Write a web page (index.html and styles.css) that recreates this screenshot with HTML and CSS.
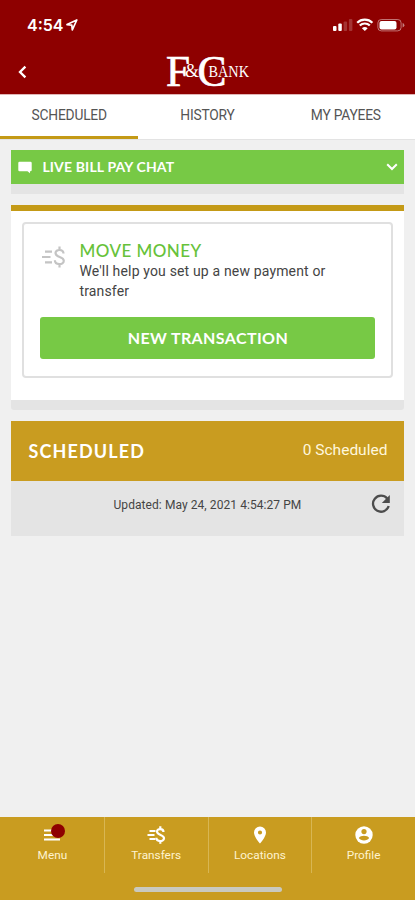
FILE: index.html
```html
<!DOCTYPE html>
<html lang="en">

<head>
    <meta charset="UTF-8">
    <meta name="viewport" content="width=device-width, initial-scale=1.0">
    <title>F&amp;C Bank</title>
    <link rel="stylesheet" href="styles.css">
</head>

<body>
    <div class="container">
        <header class="header">
            <div class="status">
                <div class="time">
                    <span>4:54</span>
                    <svg width="12" height="12" viewBox="0 0 12 12"><path d="M1 5.6 10.8 1 6.3 10.8 5.8 6.1Z" fill="none" stroke="#fff" stroke-width="1.7" stroke-linejoin="round" /></svg>
                </div>
                <svg class="signals" width="74" height="16" viewBox="0 0 74 16" fill="#fff">
                    <rect x="0" y="9" width="3.5" height="5" rx="1" />
                    <rect x="5.3" y="6.5" width="3.5" height="7.5" rx="1" />
                    <rect x="10.6" y="4.5" width="3.5" height="9.5" rx="1" opacity=".2" />
                    <rect x="15.9" y="2" width="3.5" height="12" rx="1" opacity=".2" />
                    <path d="M24.2 5.8a10.8 10.8 0 0 1 15.2 0M26.8 8.6a7 7 0 0 1 10 0" fill="none" stroke="#fff" stroke-width="2.2" />
                    <path d="M28.9 11.2a4.3 4.3 0 0 1 5.8 0l-2.9 2.9Z" />
                    <rect x="44.9" y="2.5" width="23.2" height="11.4" rx="3.4" fill="none" stroke="#fff" opacity=".45" />
                    <rect x="46.5" y="4" width="17" height="8.4" rx="2" />
                    <path d="M69.6 6v4.4q1.8-.6 1.8-2.2T69.6 6Z" opacity=".5" />
                </svg>
            </div>
            <div class="title">
                <svg class="back" width="10" height="14" viewBox="0 0 10 14"><path d="M8.4 1.6 3 7l5.4 5.4" fill="none" stroke="#fff" stroke-width="2.3" /></svg>
                <svg class="logo" width="86" height="34" viewBox="0 0 86 34">
                    <text class="big" x="0" y="30.5" textLength="24" lengthAdjust="spacingAndGlyphs">F</text>
                    <text class="amp" x="19" y="22" textLength="14" lengthAdjust="spacingAndGlyphs">&amp;</text>
                    <text class="big" x="31.5" y="30.5" textLength="29" lengthAdjust="spacingAndGlyphs">C</text>
                    <text class="bank" x="42.5" y="22" textLength="40.5" lengthAdjust="spacingAndGlyphs">BANK</text>
                </svg>
            </div>
        </header>

        <div class="tabs">
            <div class="tab active"><span>SCHEDULED</span></div>
            <div class="tab"><span>HISTORY</span></div>
            <div class="tab"><span>MY PAYEES</span></div>
        </div>

        <main class="content">
            <div class="chat">
                <svg width="14" height="13" viewBox="0 0 14 13"><path d="M1.5.8h11q1.2 0 1.2 1.2v7q0 1.2-1.2 1.2H12v2L9.5 10.2h-8Q.3 10.2.3 9V2Q.3.8 1.5.8Z" fill="#fff" /></svg>
                <span>LIVE BILL PAY CHAT</span>
                <svg class="arrow" width="12" height="8" viewBox="0 0 12 8"><path d="m1.2 1.2 4.8 4.8 4.8-4.8" fill="none" stroke="#fff" stroke-width="2" /></svg>
            </div>

            <div class="card">
                <div class="box">
                    <div class="move">
                        <svg width="24" height="24" viewBox="0 0 24 24" fill="none" stroke="#c4c4c4" stroke-width="2.2">
                            <path d="M4 6.6h7M1 12h8.5M4 17.4h7" />
                            <path d="M22.5 8.6C22.5 3.8 14.5 4 14.5 8.1c0 4.7 8.3 3 8.3 7.7 0 4.5-8.9 4.5-8.9-.6M18.5 1.5V5M18.5 19v3.5" />
                        </svg>
                        <div class="info">
                            <h2>MOVE MONEY</h2>
                            <p>We'll help you set up a new payment or transfer</p>
                        </div>
                    </div>
                    <button type="button" class="btn">NEW TRANSACTION</button>
                </div>
            </div>

            <div class="scheduled">
                <div class="scheduled-head">
                    <h2>SCHEDULED</h2>
                    <span>0 Scheduled</span>
                </div>
                <div class="updated">
                    <span>Updated: May 24, 2021 4:54:27 PM</span>
                    <svg width="20" height="20" viewBox="0 0 20 20">
                        <path d="M16.2 4.6A8 8 0 1 0 17.7 12" fill="none" stroke="#4c4c4c" stroke-width="2.3" />
                        <path d="M18.8 1v8h-8Z" fill="#4c4c4c" />
                    </svg>
                </div>
            </div>
        </main>

        <footer class="footer">
            <nav class="nav">
                <div class="item">
                    <div class="icon">
                        <svg width="20" height="20" viewBox="0 0 20 20"><path d="M2 5.5h16M2 10h16M2 14.5h16" stroke="#fff" stroke-width="2" /></svg>
                        <i class="dot"></i>
                    </div>
                    <span>Menu</span>
                </div>
                <div class="item">
                    <div class="icon">
                        <svg width="20" height="20" viewBox="0 0 20 20" fill="none" stroke="#fff" stroke-width="2.2">
                            <path d="M3.5 6h6M1.5 10h7M3.5 14h6" />
                            <path d="M17.5 7c0-3.9-6.5-3.7-6.5-.5 0 4 7 2.9 7 6.7 0 3.9-7.6 3.9-7.6-.4M14.3 1.2V4M14.3 16v2.8" />
                        </svg>
                    </div>
                    <span>Transfers</span>
                </div>
                <div class="item">
                    <div class="icon">
                        <svg width="20" height="20" viewBox="0 0 20 20"><path d="M10 1.5a6 6 0 0 0-6 6C4 12 10 18.5 10 18.5S16 12 16 7.5a6 6 0 0 0-6-6Zm0 3.9a2.1 2.1 0 1 1 0 4.2 2.1 2.1 0 0 1 0-4.2Z" fill="#fff" fill-rule="evenodd" /></svg>
                    </div>
                    <span>Locations</span>
                </div>
                <div class="item">
                    <div class="icon">
                        <svg width="20" height="20" viewBox="0 0 20 20">
                            <circle cx="10" cy="10" r="8.7" fill="#fff" />
                            <circle cx="10" cy="6.6" r="2.6" fill="#c99c20" />
                            <path d="M4.8 13c1.7-3 8.7-3 10.4 0-1.9 3.3-8.5 3.3-10.4 0Z" fill="#c99c20" />
                        </svg>
                    </div>
                    <span>Profile</span>
                </div>
            </nav>
            <div class="home"></div>
        </footer>
    </div>
</body>

</html>
```
FILE: styles.css
```css
* {
    box-sizing: border-box;
}

body {
    margin: 0;
    font-family: Roboto, sans-serif;
    background-color: #f0f0f0;
}

svg {
    display: block;
    flex-shrink: 0;
}

h2,
p {
    margin: 0;
}

.container {
    display: flex;
    flex-direction: column;
    height: 900px;
}

.header {
    height: 95px;
    background-color: #8e0000;
    border-bottom: 1px solid #e0b5b5;
}

.status {
    display: flex;
    justify-content: space-between;
    padding: 15px 14px 0 27px;
    height: 55px;
}

.time {
    display: flex;
    gap: 3px;
    height: 20px;
    align-items: center;
    color: #fff;
    font: 600 16px/20px Inter, sans-serif;
}

.signals {
    margin: 2px -6px 0 0;
}

.title {
    display: flex;
    align-items: center;
    padding-left: 17px;
    height: 34px;
}

.logo {
    margin-left: 139px;
    fill: #fff;
    font-family: "Liberation Serif", serif;
    overflow: visible;
}

.logo .big {
    font-size: 44px;
    stroke: #fff;
    stroke-width: 0.7px;
}

.logo .amp {
    font-size: 18px;
}

.logo .bank {
    font-size: 17.5px;
    stroke: #8e0000;
    stroke-width: 1.5px;
    paint-order: stroke;
}

.tabs {
    display: flex;
    height: 45px;
    background-color: #fff;
    border-bottom: 1px solid #e3e3e3;
}

.tab {
    flex: 1;
    height: 44px;
    padding-top: 11px;
    text-align: center;
    color: #555;
    font-size: 13.8px;
    line-height: 18px;
    letter-spacing: -0.2px;
}

.tab.active {
    border-bottom: 3px solid #c49a16;
}

.content {
    flex: 1;
    padding: 10px 10.6px 0 11.4px;
}

.chat {
    display: flex;
    align-items: center;
    height: 44px;
    padding: 0 6px 0 7px;
    background-color: #77c945;
    border-bottom: 10px solid #e4e4e4;
    color: #fff;
    font: 700 14px/18px Lato, sans-serif;
}

.chat span {
    margin-left: 10px;
    letter-spacing: 0.15px;
}

.chat .arrow {
    margin-left: auto;
}

.card {
    height: 205px;
    margin-top: 11px;
    padding: 11px;
    background-color: #fff;
    border-top: 6px solid #c49a16;
    border-bottom: 10px solid #e4e4e4;
    border-radius: 0 0 3px 3px;
}

.box {
    height: 156px;
    padding: 16px 17px 0 16px;
    border: 2px solid #e0e0e0;
    border-radius: 4px;
}

.move {
    display: flex;
    height: 77px;
    padding: 5px 0 0 1px;
}

.info {
    margin: -5px 0 0 14px;
}

.info h2 {
    color: #67c23a;
    font: 500 17px/21px Lato, sans-serif;
    letter-spacing: 0.45px;
}

.info p {
    width: 262px;
    color: #444;
    font-size: 14px;
    line-height: 20px;
    letter-spacing: 0.16px;
}

.btn {
    display: block;
    width: 335px;
    height: 42px;
    padding: 0;
    border: none;
    border-radius: 3px;
    background-color: #77c945;
    color: #fff;
    font: 700 16px/20px Lato, sans-serif;
    letter-spacing: 0.4px;
}

.scheduled {
    height: 115px;
    margin-top: 11px;
    background-color: #e4e4e4;
}

.scheduled-head {
    display: flex;
    justify-content: space-between;
    align-items: center;
    height: 60px;
    padding: 0 17px;
    background-color: #c99c20;
    color: #fff;
    font-size: 15.5px;
}

.scheduled-head h2 {
    font: 700 18px/24px Lato, sans-serif;
    letter-spacing: 1.15px;
}

.scheduled-head span {
    margin-top: -3px;
    color: #fff7dd;
}

.updated {
    display: flex;
    align-items: center;
    justify-content: flex-end;
    gap: 70px;
    height: 45px;
    padding-right: 13px;
    color: #444;
    font-size: 12px;
    letter-spacing: 0.07px;
}

.updated span {
    margin-top: 2px;
}

.footer {
    height: 83px;
    background-color: #c99c20;
}

.nav {
    display: flex;
    height: 56px;
    padding-left: 1px;
}

.item {
    flex: 1;
    display: flex;
    flex-direction: column;
    align-items: center;
    padding-top: 8px;
    border-right: 1px solid #d8b653;
    color: #fff3cf;
    font-size: 11.8px;
    line-height: 14px;
}

.item:last-child {
    border-right: none;
}

.item span {
    margin-top: 3px;
}

.icon {
    position: relative;
}

.dot {
    position: absolute;
    left: 9px;
    top: -1px;
    width: 14px;
    height: 14px;
    border-radius: 50%;
    background-color: #8e0000;
}

.home {
    width: 148px;
    height: 5px;
    margin: 14px auto 0;
    border-radius: 3px;
    background-color: #c9c9bf;
}
```
